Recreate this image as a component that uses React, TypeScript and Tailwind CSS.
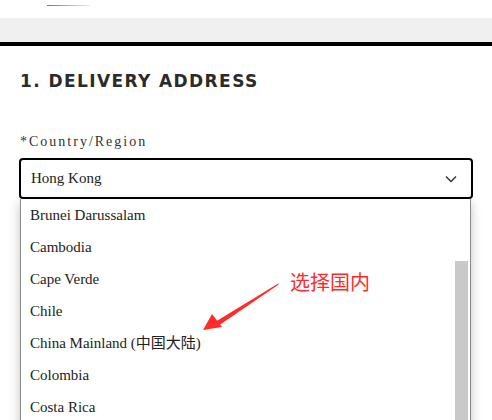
import React from "react";

const countries = [
  "Brunei Darussalam",
  "Cambodia",
  "Cape Verde",
  "Chile",
  "China Mainland (中国大陆)",
  "Colombia",
  "Costa Rica",
];

const serif = "font-['Liberation_Serif','Noto_Sans_CJK_SC',serif]";

export default function App() {
  return (
    <div className="relative w-[492px] h-[420px] overflow-hidden bg-white text-[#2b2b2b]">
      {/* top strip */}
      <div className="h-[18px] flex items-start pl-[47px] pt-[5px]">
        <div className="h-px w-[43px] bg-gradient-to-r from-[#777] to-[#eee]" />
      </div>
      <div className="h-[24px] bg-[#f0f0f0]" />
      <div className="h-[4px] bg-black" />

      <div className="px-5">
        <h2 className="mt-[25px] text-[17px] leading-[20px] font-bold tracking-[1.4px] font-['DejaVu_Sans','Liberation_Sans',sans-serif]">
          1. DELIVERY ADDRESS
        </h2>

        <label className={`block mt-[43px] text-[14px] leading-[16px] tracking-[2px] ${serif} text-[#333]`}>
          *Country/Region
        </label>

        <div className="relative mt-[8px] -ml-px w-[454px]">
          <div className="h-[41px] border-2 border-black rounded-[4px] flex items-center justify-between pl-[10px] pr-[14px]">
            <span className={`${serif} text-[15px] text-[#222]`}>Hong Kong</span>
            <svg width="12" height="8" viewBox="0 0 12 8" fill="none" stroke="#333" strokeWidth="1.4">
              <path d="M1 1.5l5 5 5-5" />
            </svg>
          </div>

          {/* dropdown list */}
          <div className="ml-px w-[451px] h-[240px] border border-[#8a8a8a] border-t-0 bg-white shadow-[0_4px_10px_rgba(0,0,0,0.25)] flex">
            <ul className="flex-1">
              {countries.map((c) => (
                <li key={c} className={`h-[32px] flex items-center pl-[9px] text-[15px] text-[#222] ${serif}`}>
                  {c}
                </li>
              ))}
            </ul>
            <div className="w-[15px] pt-[62px] pr-[2px]">
              <div className="h-full bg-[#c9c9c9]" />
            </div>
          </div>
        </div>
      </div>

      {/* annotation */}
      <div className="absolute left-[290px] top-[270px] text-[20px] leading-[24px] text-[#ff2a2a] font-['Noto_Sans_CJK_SC',sans-serif]">
        选择国内
      </div>
      <svg className="absolute left-[195px] top-[278px]" width="90" height="56" viewBox="0 0 90 56">
        <path d="M84 5 L20 44 L23 48 L83 7 Z" fill="#ff2a2a" />
        <path d="M8 52 L17 36 L27 49 Z" fill="#ff2a2a" />
      </svg>
    </div>
  );
}
